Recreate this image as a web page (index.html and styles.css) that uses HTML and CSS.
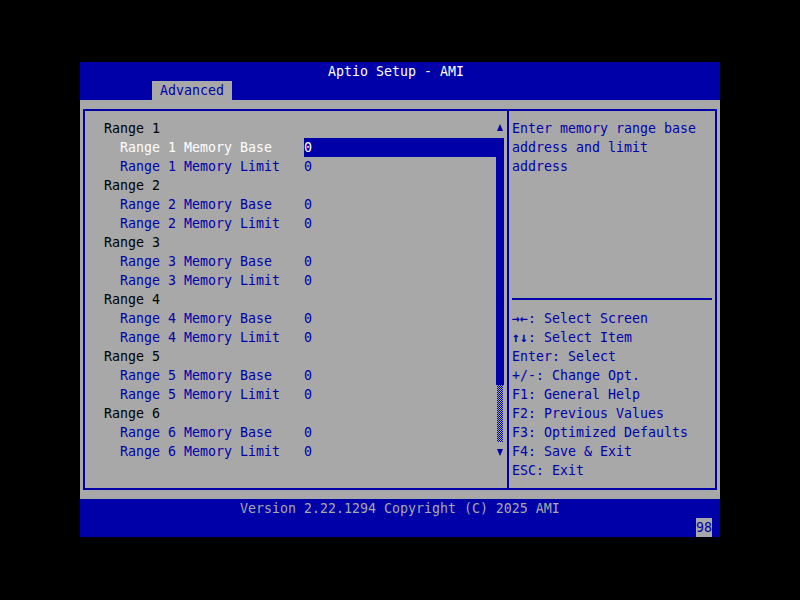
FILE: index.html
```html
<!DOCTYPE html>
<html lang="en">
<head>
  <meta charset="UTF-8">
  <meta name="viewport" content="width=device-width, initial-scale=1.0">
  <title>Aptio Setup - AMI</title>
  <link rel="stylesheet" href="styles.css">
</head>
<body>
  <div class="screen">
    <div class="title">Aptio Setup - AMI</div>
    <div class="tabs"><span class="tab">Advanced</span></div>

    <div class="main">
      <div class="frame">
        <div class="menu">
          <div class="rows">
            <div class="row head">Range 1</div>
            <div class="row item selected"><span class="label">Range 1 Memory Base</span><span class="value">0</span></div>
            <div class="row item"><span class="label">Range 1 Memory Limit</span><span class="value">0</span></div>
            <div class="row head">Range 2</div>
            <div class="row item"><span class="label">Range 2 Memory Base</span><span class="value">0</span></div>
            <div class="row item"><span class="label">Range 2 Memory Limit</span><span class="value">0</span></div>
            <div class="row head">Range 3</div>
            <div class="row item"><span class="label">Range 3 Memory Base</span><span class="value">0</span></div>
            <div class="row item"><span class="label">Range 3 Memory Limit</span><span class="value">0</span></div>
            <div class="row head">Range 4</div>
            <div class="row item"><span class="label">Range 4 Memory Base</span><span class="value">0</span></div>
            <div class="row item"><span class="label">Range 4 Memory Limit</span><span class="value">0</span></div>
            <div class="row head">Range 5</div>
            <div class="row item"><span class="label">Range 5 Memory Base</span><span class="value">0</span></div>
            <div class="row item"><span class="label">Range 5 Memory Limit</span><span class="value">0</span></div>
            <div class="row head">Range 6</div>
            <div class="row item"><span class="label">Range 6 Memory Base</span><span class="value">0</span></div>
            <div class="row item"><span class="label">Range 6 Memory Limit</span><span class="value">0</span></div>
          </div>
          <!-- scrollbar: arrows, thumb, shaded track -->
          <div class="scrollbar">
            <div class="arrow up"></div>
            <div class="thumb"></div>
            <div class="track"></div>
            <div class="arrow down"></div>
          </div>
        </div>

        <div class="help">
          <div class="desc">
            <div>Enter memory range base</div>
            <div>address and limit</div>
            <div>address</div>
          </div>
          <div class="keys">
            <div class="key"><b class="sym">→←</b>: Select Screen</div>
            <div class="key"><b class="sym">↑↓</b>: Select Item</div>
            <div class="key">Enter: Select</div>
            <div class="key">+/-: Change Opt.</div>
            <div class="key">F1: General Help</div>
            <div class="key">F2: Previous Values</div>
            <div class="key">F3: Optimized Defaults</div>
            <div class="key">F4: Save &amp; Exit</div>
            <div class="key">ESC: Exit</div>
          </div>
        </div>
      </div>
    </div>

    <div class="version">Version 2.22.1294 Copyright (C) 2025 AMI</div>
    <div class="status"><span class="badge">98</span></div>
  </div>
</body>
</html>
```

FILE: styles.css
```css
body {
  margin: 0;
  padding: 62px 0 0 80px;
  background: #000;
  font-family: "DejaVu Sans Mono", "Liberation Mono", monospace;
  font-size: 13.29px;
  line-height: 19px;
}

.screen {
  width: 640px;
  background: #0000a8;
}

.title {
  height: 19px;
  padding-left: 248px;
  color: #fff;
  white-space: pre;
}

.tabs {
  height: 19px;
  padding-left: 72px;
}

.tab {
  display: inline-block;
  width: 80px;
  height: 19px;
  padding-left: 8px;
  box-sizing: border-box;
  background: #a8a8a8;
  color: #0000a8;
}

.main {
  background: #a8a8a8;
  padding: 9px 3px;
}

.frame {
  display: flex;
  height: 381px;
  border: 2px solid #0000a8;
  box-sizing: border-box;
}

.menu {
  display: flex;
  width: 422px;
  padding: 8px 3px 0 19px;
  box-sizing: border-box;
}

.rows {
  width: 392px;
}

.row {
  display: flex;
  height: 19px;
  white-space: pre;
}

.head {
  color: #000;
}

.item {
  padding-left: 16px;
  color: #0000a8;
}

.item .label {
  width: 184px;
}

.item .value {
  flex: 1;
}

.item.selected .label {
  color: #fff;
}

.item.selected .value {
  background: #0000a8;
  color: #fff;
}

.scrollbar {
  width: 8px;
  display: flex;
  flex-direction: column;
}

.arrow {
  height: 19px;
  display: flex;
  align-items: center;
  justify-content: center;
}

.arrow.up::before {
  content: "";
  margin-top: -3px;
  border-left: 3.5px solid transparent;
  border-right: 3.5px solid transparent;
  border-bottom: 7px solid #0000a8;
}

.arrow.down::before {
  content: "";
  margin-top: 1px;
  border-left: 3.5px solid transparent;
  border-right: 3.5px solid transparent;
  border-top: 7px solid #0000a8;
}

.thumb {
  height: 247px;
  background: #0000a8;
}

.track {
  height: 57px;
  margin: 0 1px;
  background: repeating-conic-gradient(#0000a8 0 25%, #a8a8a8 0 50%) 0 0 / 2px 2px;
}

.help {
  width: 208px;
  border-left: 2px solid #0000a8;
  box-sizing: border-box;
  color: #0000a8;
}

.desc {
  height: 189px;
  margin: 0 3px;
  padding-top: 8px;
  box-sizing: border-box;
  border-bottom: 2px solid #0000a8;
}

.keys {
  padding: 9px 0 0 3px;
}

.key {
  height: 19px;
  white-space: pre;
}

.sym {
  font-weight: bold;
}

.version {
  height: 19px;
  padding-left: 160px;
  color: #a8a8a8;
  white-space: pre;
}

.status {
  display: flex;
  justify-content: flex-end;
  height: 19px;
  padding-right: 8px;
}

.badge {
  width: 16px;
  background: #a8a8a8;
  color: #0000a8;
}
```
